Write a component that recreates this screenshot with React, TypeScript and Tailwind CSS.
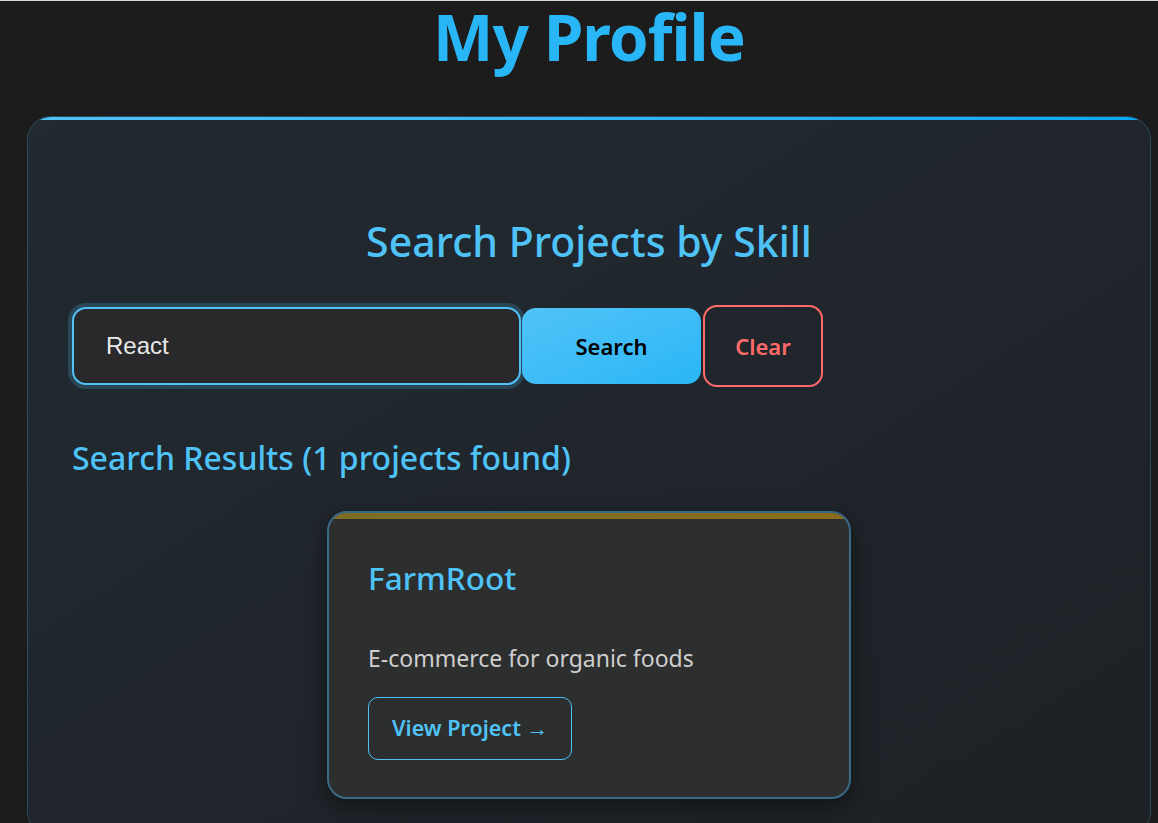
import React from "react";

export default function App() {
  const font = { fontFamily: '"Noto Sans", "Open Sans", sans-serif' };
  return (
    <div
      className="min-h-screen w-full overflow-hidden bg-[#1c1c1c] border-t border-[#d8d8d8]"
      style={font}
    >
      <h1 className="-mt-[2px] text-center font-bold text-[64px] leading-[76px] pl-[20px] text-[#29b6f6] tracking-[-1px]">
        My Profile
      </h1>
      <div className="ml-[27px] mt-[41px] w-[1124px] h-[720px] rounded-[24px] border border-[#2c4a5a] bg-gradient-to-br from-[#212a31] to-[#1e2126] relative overflow-hidden">
        <div className="absolute left-0 right-0 top-0 h-[3px] bg-gradient-to-r from-[#4fc3f7] to-[#03a9f4]" />
        <div className="pt-[97px] px-[44px]">
          <h2 className="text-center text-[41px] leading-[54px] font-medium text-[#4fc3f7]">
            Search Projects by Skill
          </h2>
          <div className="mt-[37px] flex items-center">
            <div className="w-[449px] h-[78px] rounded-[14px] border-2 border-[#4fc3f7] bg-[#29292b] shadow-[0_0_0_4px_rgba(79,195,247,0.2)] flex items-center pl-[32px]">
              <span
                className="text-[24px] text-[#e8e8e8]"
                style={{ fontFamily: '"Liberation Sans", Arial, sans-serif' }}
              >
                React
              </span>
            </div>
            <button className="ml-[1px] w-[179px] h-[76px] rounded-[14px] bg-gradient-to-br from-[#4fc3f7] to-[#29b6f6] text-black text-[22px] font-semibold">
              Search
            </button>
            <button className="ml-[2px] w-[120px] h-[82px] rounded-[14px] border-2 border-[#ff6b6b] text-[#ff6b6b] text-[22px] font-semibold">
              Clear
            </button>
          </div>
          <h3 className="mt-[49px] text-[32px] leading-[44px] font-medium text-[#4fc3f7]">
            Search Results (1 projects found)
          </h3>
          <div className="mt-[31px] flex justify-center">
            <div className="w-[524px] h-[288px] rounded-[20px] border-2 border-[#3a6a86] bg-[#2d2e2e] shadow-[0_8px_24px_rgba(0,0,0,0.45)] relative overflow-hidden px-[39px]">
              <div className="absolute left-0 right-0 top-0 h-[6px] bg-gradient-to-r from-[#7d6e24] to-[#8a6d1c]" />
              <div className="pt-[44px] text-[31.5px] leading-[42px] font-medium text-[#4fc3f7]">
                FarmRoot
              </div>
              <div className="mt-[43px] text-[23px] leading-[32px] text-[#cfcfcf]">
                E-commerce for organic foods
              </div>
              <div className="mt-[23px] inline-flex items-center justify-center w-[204px] h-[63px] rounded-[10px] border border-[#4fc3f7] text-[#4fc3f7] text-[21.5px] font-semibold">
                View Project →
              </div>
            </div>
          </div>
        </div>
      </div>
    </div>
  );
}
